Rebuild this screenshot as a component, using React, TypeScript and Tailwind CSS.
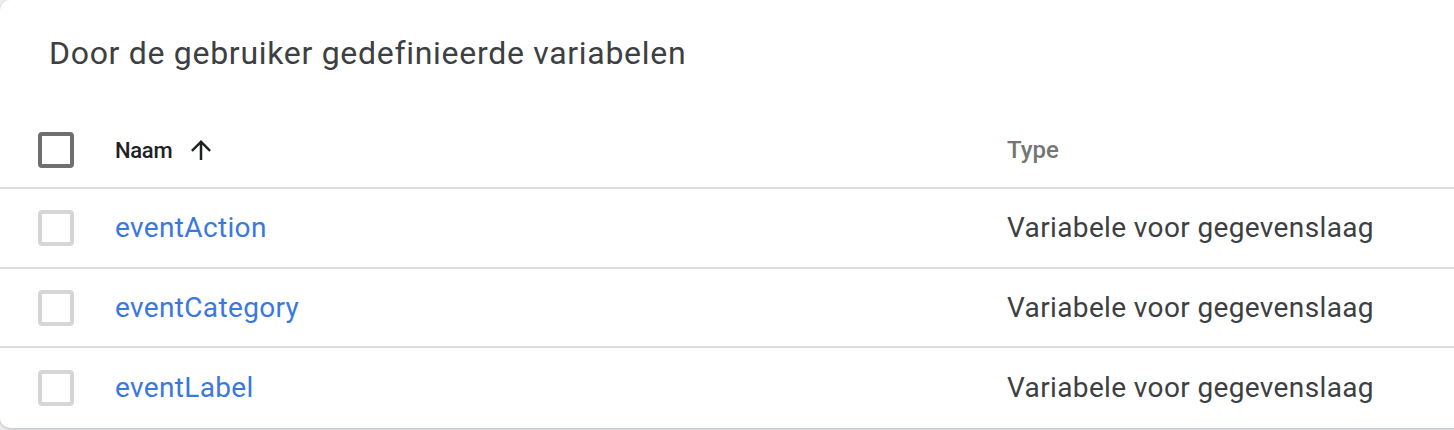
import React from "react";

const rows = ["eventAction", "eventCategory", "eventLabel"];

function ArrowUp() {
  return (
    <svg viewBox="0 0 24 24" className="w-[30px] h-[30px] fill-[#202124]">
      <path d="M4 12l1.41 1.41L11 7.83V20h2V7.83l5.58 5.59L20 12l-8-8-8 8z" />
    </svg>
  );
}

export default function App() {
  return (
    <div className="w-[1454px] h-[430px] overflow-hidden bg-[#eceff1] font-['Roboto','Liberation_Sans',sans-serif]">
      <div className="w-[1500px] h-[428px] bg-white rounded-[10px] shadow-[0_1px_3px_rgba(60,64,67,0.3)] flex flex-col">
        <div className="h-[110px] pt-[33px] pl-[49px]">
          <h1 className="text-[32px] leading-[40px] tracking-[0.7px] text-[#3c4043] font-normal">
            Door de gebruiker gedefinieerde variabelen
          </h1>
        </div>
        <div className="h-[80px] pt-[4px] border-b-2 border-[#dadce0] flex items-center">
          <div className="w-[115px] pl-[38px] flex items-center">
            <div className="w-[36px] h-[36px] border-[4px] border-[#6f6f6f] rounded-[4px]" />
          </div>
          <div className="w-[892px] flex items-center">
            <span className="text-[22px] tracking-[-0.3px] font-medium text-[#202124]">Naam</span>
            <span className="ml-[14px] flex items-center">
              <ArrowUp />
            </span>
          </div>
          <div className="text-[24px] font-medium text-[#757575]">Type</div>
        </div>
        {rows.map((name, i) => (
          <div
            key={name}
            className={`h-[80px] flex items-center ${i < rows.length - 1 ? "border-b-2 border-[#dadce0]" : ""}`}
          >
            <div className="w-[115px] pl-[38px] flex items-center">
              <div className="w-[36px] h-[36px] border-[4px] border-[#d6d6d6] rounded-[4px]" />
            </div>
            <div className="w-[892px] text-[28px] tracking-[0.35px] text-[#3a78e0]">{name}</div>
            <div className="text-[28px] tracking-[0.37px] text-[#3c4043]">Variabele voor gegevenslaag</div>
          </div>
        ))}
      </div>
    </div>
  );
}
